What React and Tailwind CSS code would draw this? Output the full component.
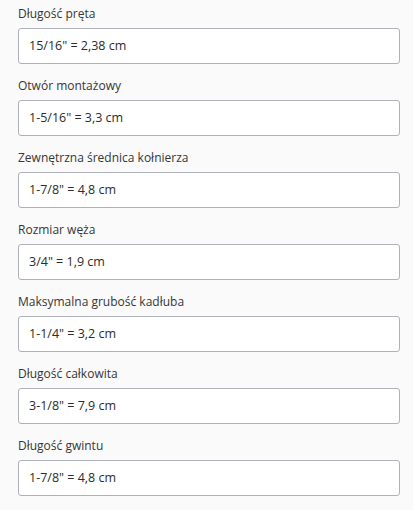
const fields = [
  { label: "Długość pręta", value: '15/16" = 2,38 cm' },
  { label: "Otwór montażowy", value: '1-5/16" = 3,3 cm' },
  { label: "Zewnętrzna średnica kołnierza", value: '1-7/8" = 4,8 cm' },
  { label: "Rozmiar węża", value: '3/4" = 1,9 cm' },
  { label: "Maksymalna grubość kadłuba", value: '1-1/4" = 3,2 cm' },
  { label: "Długość całkowita", value: '3-1/8" = 7,9 cm' },
  { label: "Długość gwintu", value: '1-7/8" = 4,8 cm' },
];

export default function App() {
  return (
    <div className="min-h-screen bg-[#fafafa] pl-[18px] pr-[13px] font-['Open_Sans',sans-serif] text-[#333]">
      {fields.map((f) => (
        <div key={f.label} className="pt-[4px] pb-[8px]">
          <label className="block text-[12px] leading-5 mb-1 text-[#363636]">{f.label}</label>
          <div className="h-9 flex items-center px-[10px] bg-white border border-[#aeb1bb] rounded-[3px] text-[12.5px] text-[#2c2c2c]">
            {f.value}
          </div>
        </div>
      ))}
    </div>
  );
}
